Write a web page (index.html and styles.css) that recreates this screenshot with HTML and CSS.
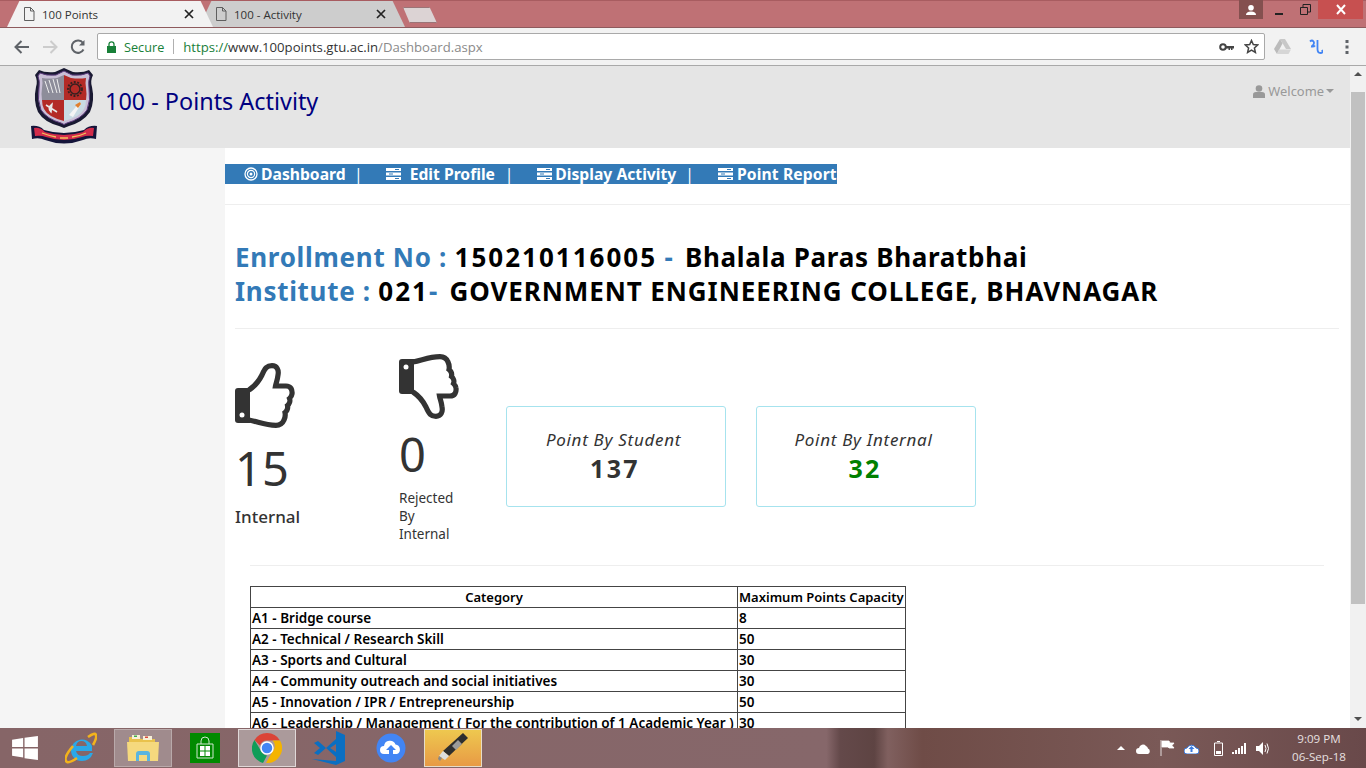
FILE: index.html
```html
<!DOCTYPE html>
<html lang="en">
<head>
<meta charset="utf-8">
<title>100 Points</title>
<link rel="stylesheet" href="styles.css">
</head>
<body>
<svg class="defs" width="0" height="0" aria-hidden="true">
  <defs>
    <symbol id="doc" viewBox="0 0 12 14"><path d="M1.500.5h6l3.500 3.500v9.500H1.500zM7.500.5V4H11" fill="none" stroke="#5f5f5f"/></symbol>
    <symbol id="x" viewBox="0 0 10 10"><path d="M1 1l8 8M9 1l-8 8" stroke="#222" stroke-width="1.700"/></symbol>
    <symbol id="thumb" viewBox="0 0 60 65">
      <path d="M14 27C20 23 24 18 27 12C30 5 32 2.700 37 2.700C42 2.700 44 7 43 12C42.500 17 41 20 40.500 23L51 23C56 23 57.500 27 57 31C56.800 33 55.500 34.500 54.500 35.500C55.500 38 54.500 41 52.500 42.500C53 45 52 48 50 49.500C50.500 52 50 55 49 57C47.500 60.500 45 62.300 41 62.300C30 62.300 24 59 14 57" fill="none" stroke="#333" stroke-width="5.200"/>
      <path d="M3 25H15V60H3Q0 60 0 57V28Q0 25 3 25Z" fill="#333"/>
      <circle cx="7" cy="52" r="2.500" fill="#fff"/>
    </symbol>
    <symbol id="tasks" viewBox="0 0 15 12"><path d="M0 0h15v3H0zM0 4.500h15v3H0zM0 9h15v3H0z" fill="#fff"/><path d="M9 1h4v1H9zM3 5.500h4v1H3zM9 10h4v1H9z" fill="#337ab7"/></symbol>
  </defs>
</svg>
<div class="screen">
  <div class="tabstrip">
    <div class="tab tab-active">
      <svg class="tab-doc"><use href="#doc"/></svg>
      <span class="tab-title">100 Points</span>
      <svg class="tab-x"><use href="#x"/></svg>
    </div>
    <div class="tab tab-back">
      <svg class="tab-doc"><use href="#doc"/></svg>
      <span class="tab-title">100 - Activity</span>
      <svg class="tab-x"><use href="#x"/></svg>
    </div>
    <div class="tab-new"></div>
    <div class="window-controls">
      <div class="win-user"><svg width="12" height="10" viewBox="0 0 12 10"><circle cx="6" cy="2.800" r="2.800" fill="#fff"/><path d="M1 10Q1 6.500 6 6.500T11 10z" fill="#fff"/></svg></div>
      <div class="win-btn"><svg width="10" height="10" viewBox="0 0 10 10"><path d="M1 8h8v2H1z" fill="#222"/></svg></div>
      <div class="win-btn"><svg width="11" height="11" viewBox="0 0 11 11"><path d="M.5 3.500h7v7h-7zM3 3.500v-3h7.500v7.500h-3" fill="none" stroke="#222"/></svg></div>
      <div class="win-close"><svg width="12" height="11" viewBox="0 0 12 11"><path d="M2 1l8 9M10 1l-8 9" stroke="#fff" stroke-width="2"/></svg></div>
    </div>
  </div>
  <div class="toolbar">
    <svg class="nav-ico" width="18" height="16" viewBox="0 0 18 16"><path d="M16 8H3M8.500 2L2.500 8l6 6" fill="none" stroke="#5f6368" stroke-width="2"/></svg>
    <svg class="nav-ico" width="18" height="16" viewBox="0 0 18 16"><path d="M2 8h13M9.500 2l6 6-6 6" fill="none" stroke="#ccc" stroke-width="2"/></svg>
    <svg class="nav-ico" width="18" height="16" viewBox="0 0 18 16"><path d="M14.500 10.500A6.200 6.200 0 1 1 14 4" fill="none" stroke="#5f6368" stroke-width="2"/><path d="M15.500 1v5.500H10z" fill="#5f6368"/></svg>
    <div class="omnibox">
      <svg class="lock" width="9" height="12" viewBox="0 0 9 12"><path d="M2 5V3.300a2.500 2.500 0 0 1 5 0V5" fill="none" stroke="#188038" stroke-width="1.300"/><path d="M0 5h9v7H0z" fill="#188038"/></svg>
      <span class="secure">Secure</span>
      <span class="omni-sep"></span>
      <span class="url"><span class="url-scheme">https://</span><span class="url-host">www.100points.gtu.ac.in</span><span class="url-path">/Dashboard.aspx</span></span>
      <svg class="omni-key" width="15" height="8" viewBox="0 0 15 8"><circle cx="4" cy="4" r="2.800" fill="none" stroke="#444" stroke-width="2"/><path d="M7 3h8v2.500h-1.500V7H12V5.500h-1V7H9.500V5.500H7z" fill="#444"/></svg>
      <svg class="omni-star" width="15" height="15" viewBox="0 0 15 15"><path d="M7.500 1.500l1.800 4.100 4.400.4-3.300 3 1 4.400-3.900-2.300-3.900 2.300 1-4.400-3.300-3 4.400-.4z" fill="none" stroke="#444" stroke-width="1.500"/></svg>
    </div>
    <svg class="ext-drive" width="17" height="15" viewBox="0 0 17 15"><path d="M6 0h5l6 10h-5z" fill="#c8c8c8"/><path d="M6 0l2.500 4.500L3 15 0 10z" fill="#bbb"/><path d="M5 10.500h12L14.500 15H3z" fill="#d6d6d6"/></svg>
    <svg class="ext-pearl" width="14" height="16" viewBox="0 0 14 16"><path d="M1 2.500q2-2 3.500 0T3 7M2 7.500q3 .5 4-1M8.500 1v9q0 4 3 4t1.500-3" fill="none" stroke="#4285f4" stroke-width="1.800"/></svg>
    <svg class="ext-menu" width="4" height="14" viewBox="0 0 4 14"><path d="M.5 0h3v3h-3zM.5 5.500h3v3h-3zM.5 11h3v3h-3z" fill="#5f6368"/></svg>
  </div>
  <div class="viewport">
    <div class="page">
      <header class="site-head">
        <svg class="logo" width="66" height="78" viewBox="0 0 66 78">
          <path d="M33 1L42 5Q52 6 58 3L62 8Q59 14 61 20Q64 34 59 45Q52 55 38 59L33 61L28 59Q13 55 7 45Q2 34 5 20Q7 14 4 8L8 3Q14 6 24 5z" fill="#191932"/>
          <path d="M33 4L41 8Q51 9 57 6L59 9Q57 14 58 21Q60 33 56 43Q50 52 36 56L33 57.500L30 56Q16 52 10 43Q6 33 8 21Q9 14 7 9L9 6Q15 9 25 8z" fill="#c9bfd6" stroke="#5b3a7c"/>
          <path d="M33 8V33H11Q10 27 11 21Q12 16 11 11Q18 12 26 11z" fill="#8d8d9a"/>
          <path d="M33 8L40 11Q48 12 55 11Q54 16 55 21Q56 27 55 33H33z" fill="#b32a26"/>
          <path d="M11 33H33V54Q17 50 13 42Q11 38 11 33z" fill="#b32a26"/>
          <path d="M33 33H55Q55 38 53 42Q49 50 33 54z" fill="#c9dbe3"/>
          <path d="M14 14l4 12M18 13l4 13M22 12l4 14M26 12l3 14" stroke="#eee" stroke-width="1"/>
          <circle cx="44" cy="22" r="5" fill="none" stroke="#352020" stroke-width="1.500"/>
          <circle cx="44" cy="22" r="7" fill="none" stroke="#352020" stroke-width="1.800" stroke-dasharray="2 1.500"/>
          <path d="M15 38l11 7M20 45q-4-4 1-8z" stroke="#e8e8e8" stroke-width="1.500" fill="#d8d8d8"/>
          <path d="M38 48l11-13 1 2-8 13z" fill="#f4f4f4"/><path d="M44 38l5-3 1 2-3 4z" fill="#e08030"/>
          <path d="M0 59Q8 58 13 63Q33 69 53 63Q58 58 66 59L65 72Q58 70 52 73Q33 80 14 73Q8 70 1 72z" fill="#14143a"/>
          <path d="M3 61Q9 60 14 65Q33 71 52 65Q57 60 63 61L62 69Q56 68 51 70Q33 76 15 70Q10 68 4 69z" fill="#d22b4a"/>
          <path d="M11 66q8 3 14 4M29 71h8M41 70q8-1 14-4" stroke="#f2c25c" stroke-width="1.300" fill="none"/>
        </svg>
        <h1 class="site-title">100 - Points Activity</h1>
        <div class="welcome">
          <svg width="12" height="13" viewBox="0 0 12 13"><circle cx="6" cy="3.500" r="3.300" fill="#999"/><path d="M0 13V9.500Q0 7 3 7h6q3 0 3 2.500V13z" fill="#999"/></svg>
          <span>Welcome</span><i class="caret"></i>
        </div>
      </header>
      <div class="body-row">
        <aside class="side"></aside>
        <main class="content">
          <nav class="menu">
            <svg class="m-bull" width="14" height="14" viewBox="0 0 14 14"><circle cx="7" cy="7" r="6" fill="none" stroke="#fff" stroke-width="1.300"/><circle cx="7" cy="7" r="3.600" fill="none" stroke="#fff" stroke-width="1.200"/><circle cx="7" cy="7" r="1.500" fill="#fff"/></svg>
            <span class="m-text m-dash">Dashboard</span><span class="m-sep m-sep1">|</span>
            <svg class="m-ico m-ico2"><use href="#tasks"/></svg>
            <span class="m-text m-edit">Edit Profile</span><span class="m-sep m-sep2">|</span>
            <svg class="m-ico m-ico3"><use href="#tasks"/></svg>
            <span class="m-text m-disp">Display Activity</span><span class="m-sep m-sep3">|</span>
            <svg class="m-ico m-ico4"><use href="#tasks"/></svg>
            <span class="m-text m-point">Point Report</span>
          </nav>
          <hr class="rule rule-nav">
          <div class="identity">
            <h2 class="id-line"><span class="id-key">Enrollment No : </span><span class="id-num">150210116005</span> <span class="id-key id-gap">- </span>Bhalala Paras Bharatbhai</h2>
            <h2 class="id-line"><span class="id-key">Institute : </span><span class="id-num">021</span><span class="id-key id-gap">- </span><span class="id-caps">GOVERNMENT ENGINEERING COLLEGE, BHAVNAGAR</span></h2>
          </div>
          <hr class="rule rule-id">
          <section class="stats">
            <div class="stat stat-up">
              <svg class="thumb"><use href="#thumb"/></svg>
              <div class="stat-num">15</div>
              <div class="stat-label">Internal</div>
            </div>
            <div class="stat stat-down">
              <svg class="thumb thumb-down"><use href="#thumb"/></svg>
              <div class="stat-num stat-num-down">0</div>
              <div class="stat-sub">Rejected<br>By<br>Internal</div>
            </div>
            <div class="card">
              <div class="card-title">Point By Student</div>
              <div class="card-value">137</div>
            </div>
            <div class="card">
              <div class="card-title">Point By Internal</div>
              <div class="card-value card-green">32</div>
            </div>
          </section>
          <hr class="rule rule-stats">
          <table class="points">
            <colgroup><col class="col-a"><col class="col-b"></colgroup>
            <tr><th>Category</th><th>Maximum Points Capacity</th></tr>
            <tr><td>A1 - Bridge course</td><td>8</td></tr>
            <tr><td>A2 - Technical / Research Skill</td><td>50</td></tr>
            <tr><td>A3 - Sports and Cultural</td><td>30</td></tr>
            <tr><td>A4 - Community outreach and social initiatives</td><td>30</td></tr>
            <tr><td>A5 - Innovation / IPR / Entrepreneurship</td><td>50</td></tr>
            <tr><td>A6 - Leadership / Management ( For the contribution of 1 Academic Year )</td><td>30</td></tr>
          </table>
        </main>
      </div>
    </div>
    <div class="scrollbar">
      <i class="sb-up"></i>
      <div class="sb-thumb"></div>
      <i class="sb-down"></i>
    </div>
  </div>
  <footer class="taskbar">
    <div class="tb-item tb-start"><svg width="26" height="24" viewBox="0 0 28 26"><path d="M0 4l12-1.700V12H0zM13.500 2L28 0v12H13.500zM0 13.500h12v9.700L0 21.500zM13.500 13.500H28V26l-14.500-2z" fill="#fff"/></svg></div>
    <div class="tb-item"><svg width="32" height="32" viewBox="0 0 32 32"><path d="M6 18a11 11 0 0 1 21-4v5H11q1 5 7 5 5 0 7-3h3q-3 8-11 8C10 29 6 24 6 18zm5-4h11q-1-5-5.500-5T11 14z" fill="#2aa8e8"/><path d="M23 5q7-5 8-2t-3 10M8 14Q-3 27 2 30q3 1 10-4" fill="none" stroke="#f2b31c" stroke-width="2.600"/></svg></div>
    <div class="tb-item tb-open"><svg width="32" height="30" viewBox="0 0 32 30"><path d="M2 4h10l2 2h14v6H2z" fill="#e9c24c"/><path d="M5 2h8v4H5z" fill="#f7f0d6"/><path d="M16 3h9v4h-9z" fill="#f7f0d6"/><path d="M7 2.500h3v1.500H7z" fill="#3bb04a"/><path d="M18 3.500h3V5h-3z" fill="#d9493c"/><path d="M0 9h32l-1 19H1z" fill="#f5d97e"/><path d="M9 28v-7q0-3 3-3h8q3 0 3 3v7h-3v-6h-8v6z" fill="#5ab5e0"/></svg></div>
    <div class="tb-item"><svg width="30" height="30" viewBox="0 0 30 30"><path d="M0 0h30v30H0z" fill="#008a00"/><path d="M11 11V8a4 4 0 0 1 8 0v3M7 11v14h16V11z" fill="none" stroke="#cfe8cf" stroke-width="1"/><path d="M10 13h4.500v4.500H10zM15.500 13H20v4.500h-4.500zM10 18.500h4.500V23H10zM15.500 18.500H20V23h-4.500z" fill="#fff"/></svg></div>
    <div class="tb-item tb-active"><svg width="30" height="30" viewBox="0 0 30 30"><path d="M15 0a15 15 0 0 1 13 7.500H15a7.500 7.500 0 0 0-7 5L2.500 7A15 15 0 0 1 15 0z" fill="#db4437"/><path d="M2.500 7L9 18a7.500 7.500 0 0 0 6 4.500L11 30A15 15 0 0 1 2.500 7z" fill="#0f9d58"/><path d="M28 7.500A15 15 0 0 1 14 30l6.500-11.500a7.500 7.500 0 0 0 0-11z" fill="#f4b400"/><circle cx="15" cy="15" r="6" fill="#4285f4" stroke="#fff" stroke-width="1.500"/></svg></div>
    <div class="tb-item"><svg width="34" height="34" viewBox="0 0 34 34"><path d="M24 0l9 4v26l-9 4L0 28l24 2V4z" fill="#0a6fc2"/><path d="M24 8L14 17 6 10 2 12l6 5-6 5 4 2 8-7 10 9v-5l-6-4 6-4z" fill="#0a6fc2"/></svg></div>
    <div class="tb-item"><svg width="30" height="30" viewBox="0 0 30 30"><circle cx="15" cy="15" r="14.500" fill="#4285f4"/><path d="M8 21a4 4 0 0 1 0-8 6 6 0 0 1 11.500-1.500A5 5 0 0 1 21 21h-4v-4h3l-5-5-5 5h3v4z" fill="#fff"/></svg></div>
    <div class="tb-item tb-usb"><svg width="32" height="32" viewBox="0 0 32 32"><path d="M26 1l5 5-19 18-6-5z" fill="#2e2e2e"/><path d="M21 8l4 4-6 6-4-4z" fill="#9a9a9a"/><path d="M6 19l6 5-4 4-6-4z" fill="#ddd"/><path d="M2 24l3 2-2 3-2-2z" fill="#888"/></svg></div>
    <div class="tray">
      <i class="tray-up"></i>
      <svg width="15" height="11" viewBox="0 0 15 11"><path d="M3 11a3 3 0 0 1 0-6 4 4 0 0 1 7-2 3.500 3.500 0 0 1 2 2.500 3 3 0 0 1 0 5.500z" fill="#fff"/></svg>
      <svg width="15" height="16" viewBox="0 0 15 16"><path d="M1 0v16M2 1h7l1 2h4l-2 2.500 2 2.500H9L8 7H2z" fill="#fff" stroke="#fff" stroke-width=".8"/></svg>
      <svg width="15" height="11" viewBox="0 0 15 11"><path d="M3 11a3 3 0 0 1 0-6 5 5 0 0 1 9 0 3 3 0 0 1 0 6z" fill="#fff" stroke="#3a7be0"/><path d="M7.500 3l3 3H8.500v3h-2V6H4.500z" fill="#3a7be0"/></svg>
      <svg class="tray-batt" width="9" height="15" viewBox="0 0 9 15"><path d="M3 .5h3M.5 2h8v12.500h-8z" fill="none" stroke="#fff"/><path d="M2 10h5v3H2z" fill="#fff"/></svg>
      <svg width="15" height="11" viewBox="0 0 15 11"><path d="M0 9h2v2H0zM3 7h2v4H3zM6 5h2v6H6zM9 3h2v8H9zM12 0h2v11h-2z" fill="#fff"/></svg>
      <svg width="15" height="13" viewBox="0 0 15 13"><path d="M0 4h3l4-4v13L3 9H0z" fill="#fff"/><path d="M9 3q2 3.500 0 7M11 1.500q3 5 0 10" fill="none" stroke="#fff"/></svg>
      <div class="clock"><span class="clock-time">9:09 PM</span><span>06-Sep-18</span></div>
    </div>
  </footer>
</div>
</body>
</html>
```
FILE: styles.css
```css
* { box-sizing: border-box; }
html, body { margin: 0; padding: 0; height: 768px; overflow: hidden; background: #fff; }
body { font-family: "Noto Sans", "Open Sans", sans-serif; }
.defs { display: block; height: 0; }
.screen { width: 1366px; height: 768px; display: flex; flex-direction: column; overflow: hidden; }

/* browser chrome */
.tabstrip { height: 28px; flex: none; background: #bf7175; border-top: 1px solid #a85c60; border-bottom: 1px solid #8e5a5d; display: flex; align-items: flex-end; padding-left: 7px; font-family: "Open Sans", sans-serif; }
.tab { width: 206px; height: 26px; flex: none; display: flex; align-items: center; padding: 0 17px 0 16px; clip-path: polygon(0 100%, 6% 0, 94% 0, 100% 100%); font-size: 11.500px; color: #333; }
.tab-active { background: #f2f2f2; z-index: 1; }
.tab-back { background: #cdcdcd; margin-left: -14px; }
.tab-doc { width: 12px; height: 14px; flex: none; }
.tab-title { flex: 1; margin-left: 7px; }
.tab-x { width: 10px; height: 10px; flex: none; margin-right: 2px; }
.tab-new { width: 34px; height: 16px; margin: 0 0 4px -2px; flex: none; background: #dcd3d4; border: 1px solid #9b7477; clip-path: polygon(0 0, 78% 0, 100% 100%, 20% 100%); }
.window-controls { margin-left: auto; align-self: flex-start; display: flex; margin-top: -1px; margin-right: 3px; }
.win-user { width: 24px; height: 19px; background: #84504f; display: flex; align-items: center; justify-content: center; margin-right: 2px; }
.win-btn { width: 27px; height: 19px; display: flex; align-items: center; justify-content: center; }
.win-close { width: 45px; height: 19px; background: #c75050; display: flex; align-items: center; justify-content: center; margin-left: -1px; }
.toolbar { height: 38px; flex: none; background: #f2f2f2; border-bottom: 1px solid #a9a9a9; display: flex; align-items: center; padding: 0 17px 0 13px; }
.nav-ico { flex: none; margin-right: 10px; }
.omnibox { width: 1169px; height: 27px; margin-left: 0; background: #fff; border: 1px solid #a9a9a9; border-radius: 2px; display: flex; align-items: center; padding: 0 5px 0 9px; font-family: "Open Sans", sans-serif; font-size: 13px; }
.lock { flex: none; }
.secure { color: #188038; margin-left: 8px; font-size: 12.700px; }
.omni-sep { width: 1px; height: 15px; background: #b0b0b0; margin: 0 9px; }
.url { color: #333; white-space: nowrap; font-size: 13.150px; }
.url-scheme { color: #188038; }
.url-path { color: #8a8a8a; }
.omni-key { margin-left: auto; margin-right: 10px; }
.ext-drive { margin-left: 9px; }
.ext-pearl { margin-left: 18px; }
.ext-menu { margin-left: 22px; }

/* page */
.viewport { height: 662px; flex: none; display: flex; }
.page { flex: 1; min-width: 0; overflow: hidden; color: #111; }
.site-head { height: 82px; background: #e5e5e5; display: flex; align-items: flex-start; padding-left: 31px; }
.logo { flex: none; margin-top: 1px; }
.site-title { margin: 20px 0 0 8px; font-size: 23.400px; line-height: 30px; font-weight: 400; color: #000080; }
.welcome { margin: 16px 16px 0 auto; display: flex; align-items: center; gap: 3px; color: #999; font-size: 12.900px; line-height: 18px; }
.caret { width: 0; height: 0; border: 4px solid transparent; border-top-color: #999; border-bottom: 0; margin-left: -1px; }
.body-row { display: flex; height: 580px; }
.side { width: 225px; flex: none; background: #f5f5f5; }
.content { flex: 1; min-width: 0; background: #fff; }
.menu { margin-top: 16px; width: 612px; height: 20px; padding-bottom: 1px; background: #337ab7; color: #fff; display: flex; align-items: center; font-weight: 700; font-size: 15.700px; line-height: 18px; overflow: hidden; white-space: nowrap; }
.m-bull { margin-left: 19px; flex: none; }
.m-ico { width: 15px; height: 12px; flex: none; }
.m-text { flex: none; }
.m-dash { margin-left: 3px; width: 85px; }
.m-sep { flex: none; font-weight: 400; }
.m-sep1 { margin-left: 8px; }
.m-ico2 { margin-left: 23px; }
.m-edit { margin-left: 9px; width: 87px; }
.m-sep2 { margin-left: 8px; }
.m-ico3 { margin-left: 24px; }
.m-disp { margin-left: 3px; width: 122px; }
.m-sep3 { margin-left: 8px; }
.m-ico4 { margin-left: 24px; }
.m-point { margin-left: 4px; width: 99px; letter-spacing: .1px; }
.rule { border: 0; border-top: 1px solid #eee; margin: 0; }
.rule-nav { margin-top: 20px; }
.identity { padding: 35px 0 0 10px; }
.id-line { margin: 0; font-size: 26px; line-height: 34px; font-weight: 700; letter-spacing: .7px; color: #000; white-space: nowrap; }
.id-num { letter-spacing: 2px; }
.id-gap { margin-right: 4px; }
.id-caps { letter-spacing: .92px; }
.id-key { color: #337ab7; }
.rule-id { margin: 20px 11px 0 10px; }
.stats { display: flex; align-items: flex-start; padding-left: 10px; height: 236px; }
.stat-up { width: 164px; padding-top: 34px; flex: none; }
.stat-down { width: 107px; padding-top: 25px; flex: none; }
.thumb { width: 60px; height: 65px; display: block; }
.thumb-down { transform: scaleY(-1); }
.stat-num { font-size: 47px; line-height: 56px; margin-top: 12px; color: #333; font-weight: 400; }
.stat-num-down { margin-top: 7px; }
.stat-label { font-size: 17px; line-height: 24px; margin-top: 9px; font-weight: 500; color: #333; }
.stat-sub { font-size: 13.500px; line-height: 18px; margin-top: 7px; color: #333; }
.card { width: 220px; height: 101px; margin-top: 77px; margin-right: 30px; flex: none; border: 1px solid #a6e3ee; border-radius: 3px; text-align: center; padding-top: 21px; }
.card-title { font-size: 17px; line-height: 24px; font-style: italic; letter-spacing: .7px; color: #333; padding-right: 5px; }
.card-value { font-size: 25px; line-height: 34px; font-weight: 700; letter-spacing: 2.300px; color: #333; margin-top: -1px; padding-right: 2px; }
.card-green { color: #008000; }
.rule-stats { margin: 0 26px 0 25px; }
.points { margin: 20px 0 0 25px; width: 655px; table-layout: fixed; border-collapse: collapse; font-size: 13.500px; font-weight: 600; color: #000; }
.col-a { width: 487px; }
.col-b { width: 168px; }
.points th, .points td { border: 1px solid #444; padding: 0 1px; height: 21px; line-height: 20px; white-space: nowrap; overflow: hidden; text-align: left; }
.points th { font-weight: 600; font-size: 13px; }
.points th:first-child { text-align: center; }

/* scrollbar */
.scrollbar { width: 16px; flex: none; background: #f1f1f1; display: flex; flex-direction: column; align-items: center; }
.sb-up { width: 0; height: 0; border: 4px solid transparent; border-bottom: 4px solid #505050; border-top: 0; margin-top: 6px; }
.sb-thumb { width: 14px; height: 512px; background: #c1c1c1; margin-top: 16px; }
.sb-down { width: 0; height: 0; border: 4px solid transparent; border-top: 4px solid #505050; border-bottom: 0; margin-top: 113px; }

/* taskbar */
.taskbar { height: 40px; flex: none; display: flex; align-items: center; background: linear-gradient(90deg, #866567 0, #86676a 60.500%, #64494a 61.500%, #5e4443 64%, #80605f 65%, #6f4c47 67.500%, #7a5957 85%, #69494a 100%); }
.tb-item { width: 58px; height: 38px; flex: none; display: flex; align-items: center; justify-content: center; margin-right: 4px; }
.tb-start { width: 50px; margin-right: 2px; }
.tb-open { background: #a08b8d; border: 1px solid #b9a9aa; }
.tb-active { background: #ab9a9b; border: 1px solid #e0d8d8; }
.tb-usb { background: linear-gradient(#eec84f, #e89a45); border: 1px solid #e6dcc8; }
.tray { margin-left: auto; display: flex; align-items: center; gap: 9px; color: #fff; }
.tray-up { width: 0; height: 0; border: 4px solid transparent; border-bottom: 4px solid #fff; border-top: 0; margin-right: 2px; }
.tray-batt { margin-left: 6px; }
.clock { display: flex; flex-direction: column; align-items: center; width: 78px; margin-right: 8px; font-family: "Open Sans", sans-serif; font-size: 11.600px; line-height: 18px; color: #e8e0e0; }
```
